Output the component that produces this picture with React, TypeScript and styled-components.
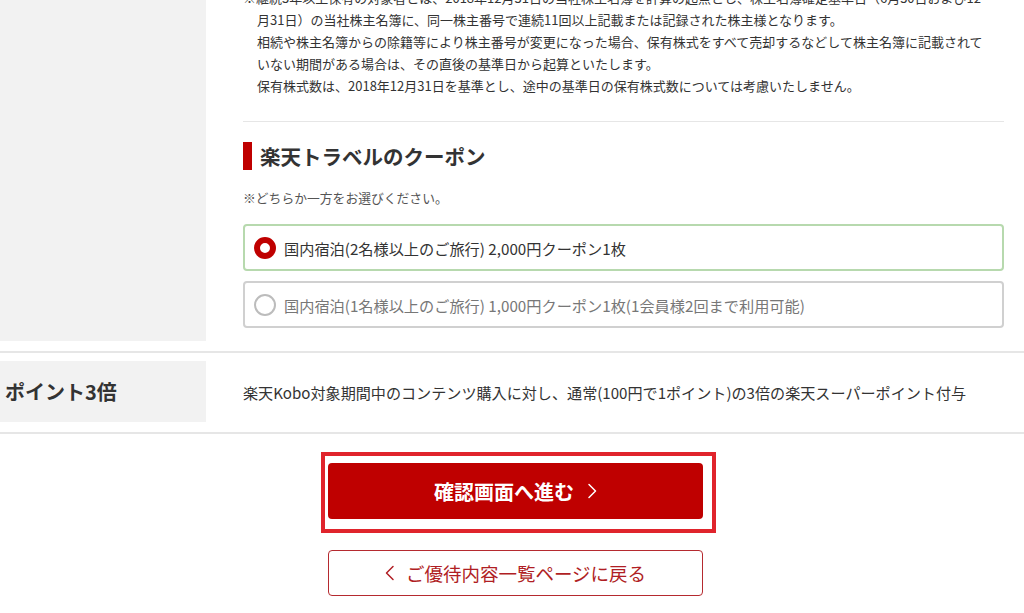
import styled, { createGlobalStyle } from "styled-components";

const GlobalStyle = createGlobalStyle`
  html, body {
    margin: 0;
    padding: 0;
    background: #fff;
    overflow: hidden;
  }
  body {
    font-family: "Noto Sans CJK JP", "Noto Sans", sans-serif;
    color: #333;
  }
`;

const Page = styled.div`
  margin-top: -13px;
`;

const Row = styled.div<{ $top?: number }>`
  display: grid;
  grid-template-columns: 206px 1fr;
  padding: ${(p) => p.$top ?? 8}px 0 10px;
  border-bottom: 2px solid #e6e6e6;
`;

const Label = styled.div<{ $height?: number }>`
  background: #f2f2f2;
  display: flex;
  align-items: center;
  padding-left: 5px;
  font-size: 20px;
  font-weight: 700;
  color: #333;
  ${(p) => (p.$height ? `height: ${p.$height}px;` : "")}
`;

const Cell = styled.div<{ $center?: boolean }>`
  padding: 0 20px ${(p) => (p.$center ? 0 : 13)}px 37px;
  display: flex;
  flex-direction: column;
  justify-content: ${(p) => (p.$center ? "center" : "flex-start")};
`;

const Notes = styled.div`
  font-size: 13px;
  line-height: 22px;
  padding-left: 14px;
  white-space: nowrap;
  padding-bottom: 24px;
  border-bottom: 1px solid #e6e6e6;
`;

const Note = styled.p<{ $mark?: boolean }>`
  margin: 0;
  text-indent: ${(p) => (p.$mark ? "-14px" : "0")};
`;

const Heading = styled.h2`
  margin: 20px 0 0;
  display: flex;
  align-items: center;
  gap: 8px;
  font-size: 20.5px;
  font-weight: 700;
  line-height: 28px;
  color: #333;

  &::before {
    content: "";
    width: 9px;
    height: 28px;
    background: #bf0000;
  }
`;

const Hint = styled.p`
  margin: 19px 0 17px;
  font-size: 12.8px;
  line-height: 18px;
  color: #555;
`;

const Options = styled.div`
  display: flex;
  flex-direction: column;
  gap: 10px;
`;

const Option = styled.label<{ $selected?: boolean }>`
  display: flex;
  align-items: center;
  gap: 8px;
  height: 47px;
  box-sizing: border-box;
  padding-left: 9px;
  border: 2px solid ${(p) => (p.$selected ? "#b7d9ae" : "#d0d0d0")};
  border-radius: 4px;
  font-size: 15.2px;
  color: ${(p) => (p.$selected ? "#333" : "#777")};
  cursor: pointer;
`;

const Radio = styled.span<{ $checked?: boolean }>`
  width: 22px;
  height: 22px;
  box-sizing: border-box;
  border-radius: 50%;
  border: ${(p) => (p.$checked ? "6px solid #bf0000" : "2px solid #bcbcbc")};
  background: #fff;
  flex-shrink: 0;
`;

const PointText = styled.p`
  margin: 0;
  font-size: 15.1px;
  color: #333;
`;

const Actions = styled.div`
  display: flex;
  flex-direction: column;
  align-items: flex-start;
  padding: 18px 0 0 321px;
`;

const FocusFrame = styled.div`
  border: 4px solid #e0242c;
  padding: 7px 9px 10px 3px;
`;

const PrimaryButton = styled.button`
  width: 375px;
  height: 56px;
  border: none;
  border-radius: 4px;
  background: #bf0000;
  color: #fff;
  font-family: inherit;
  font-size: 20px;
  font-weight: 700;
  display: flex;
  align-items: center;
  justify-content: center;
  gap: 13px;
  cursor: pointer;
`;

const SecondaryButton = styled.button`
  margin: 17px 0 0 7px;
  width: 375px;
  height: 46px;
  border: 1px solid #b52a2f;
  border-radius: 4px;
  background: #fff;
  color: #b01e24;
  font-family: inherit;
  font-size: 18.5px;
  display: flex;
  align-items: center;
  justify-content: center;
  gap: 11px;
  cursor: pointer;
`;

const Chevron = ({ dir, color }: { dir: "left" | "right"; color: string }) => (
  <svg width="10" height="16" viewBox="0 0 10 16" fill="none">
    <path
      d={dir === "right" ? "M2 1.5 L8.5 8 L2 14.5" : "M8 1.5 L1.5 8 L8 14.5"}
      stroke={color}
      strokeWidth="1.5"
      strokeLinecap="round"
      strokeLinejoin="round"
    />
  </svg>
);

export default function App() {
  return (
    <>
      <GlobalStyle />
      <Page>
        <Row $top={0}>
          <Label />
          <Cell>
            <Notes>
              <Note $mark>
                ※継続3年以上保有の対象者とは、2018年12月31日の当社株主名簿を計算の起点とし、株主名簿確定基準日（6月30日および12
                <br />
                月31日）の当社株主名簿に、同一株主番号で連続11回以上記載または記録された株主様となります。
              </Note>
              <Note>
                相続や株主名簿からの除籍等により株主番号が変更になった場合、保有株式をすべて売却するなどして株主名簿に記載されて
                <br />
                いない期間がある場合は、その直後の基準日から起算といたします。
              </Note>
              <Note>
                保有株式数は、2018年12月31日を基準とし、途中の基準日の保有株式数については考慮いたしません。
              </Note>
            </Notes>
            <Heading>楽天トラベルのクーポン</Heading>
            <Hint>※どちらか一方をお選びください。</Hint>
            <Options>
              <Option $selected>
                <Radio $checked />
                国内宿泊(2名様以上のご旅行) 2,000円クーポン1枚
              </Option>
              <Option>
                <Radio />
                国内宿泊(1名様以上のご旅行) 1,000円クーポン1枚(1会員様2回まで利用可能)
              </Option>
            </Options>
          </Cell>
        </Row>
        <Row>
          <Label $height={61}>ポイント3倍</Label>
          <Cell $center>
            <PointText>
              楽天Kobo対象期間中のコンテンツ購入に対し、通常(100円で1ポイント)の3倍の楽天スーパーポイント付与
            </PointText>
          </Cell>
        </Row>
        <Actions>
          <FocusFrame>
            <PrimaryButton>
              確認画面へ進む
              <Chevron dir="right" color="#fff" />
            </PrimaryButton>
          </FocusFrame>
          <SecondaryButton>
            <Chevron dir="left" color="#b01e24" />
            ご優待内容一覧ページに戻る
          </SecondaryButton>
        </Actions>
      </Page>
    </>
  );
}
